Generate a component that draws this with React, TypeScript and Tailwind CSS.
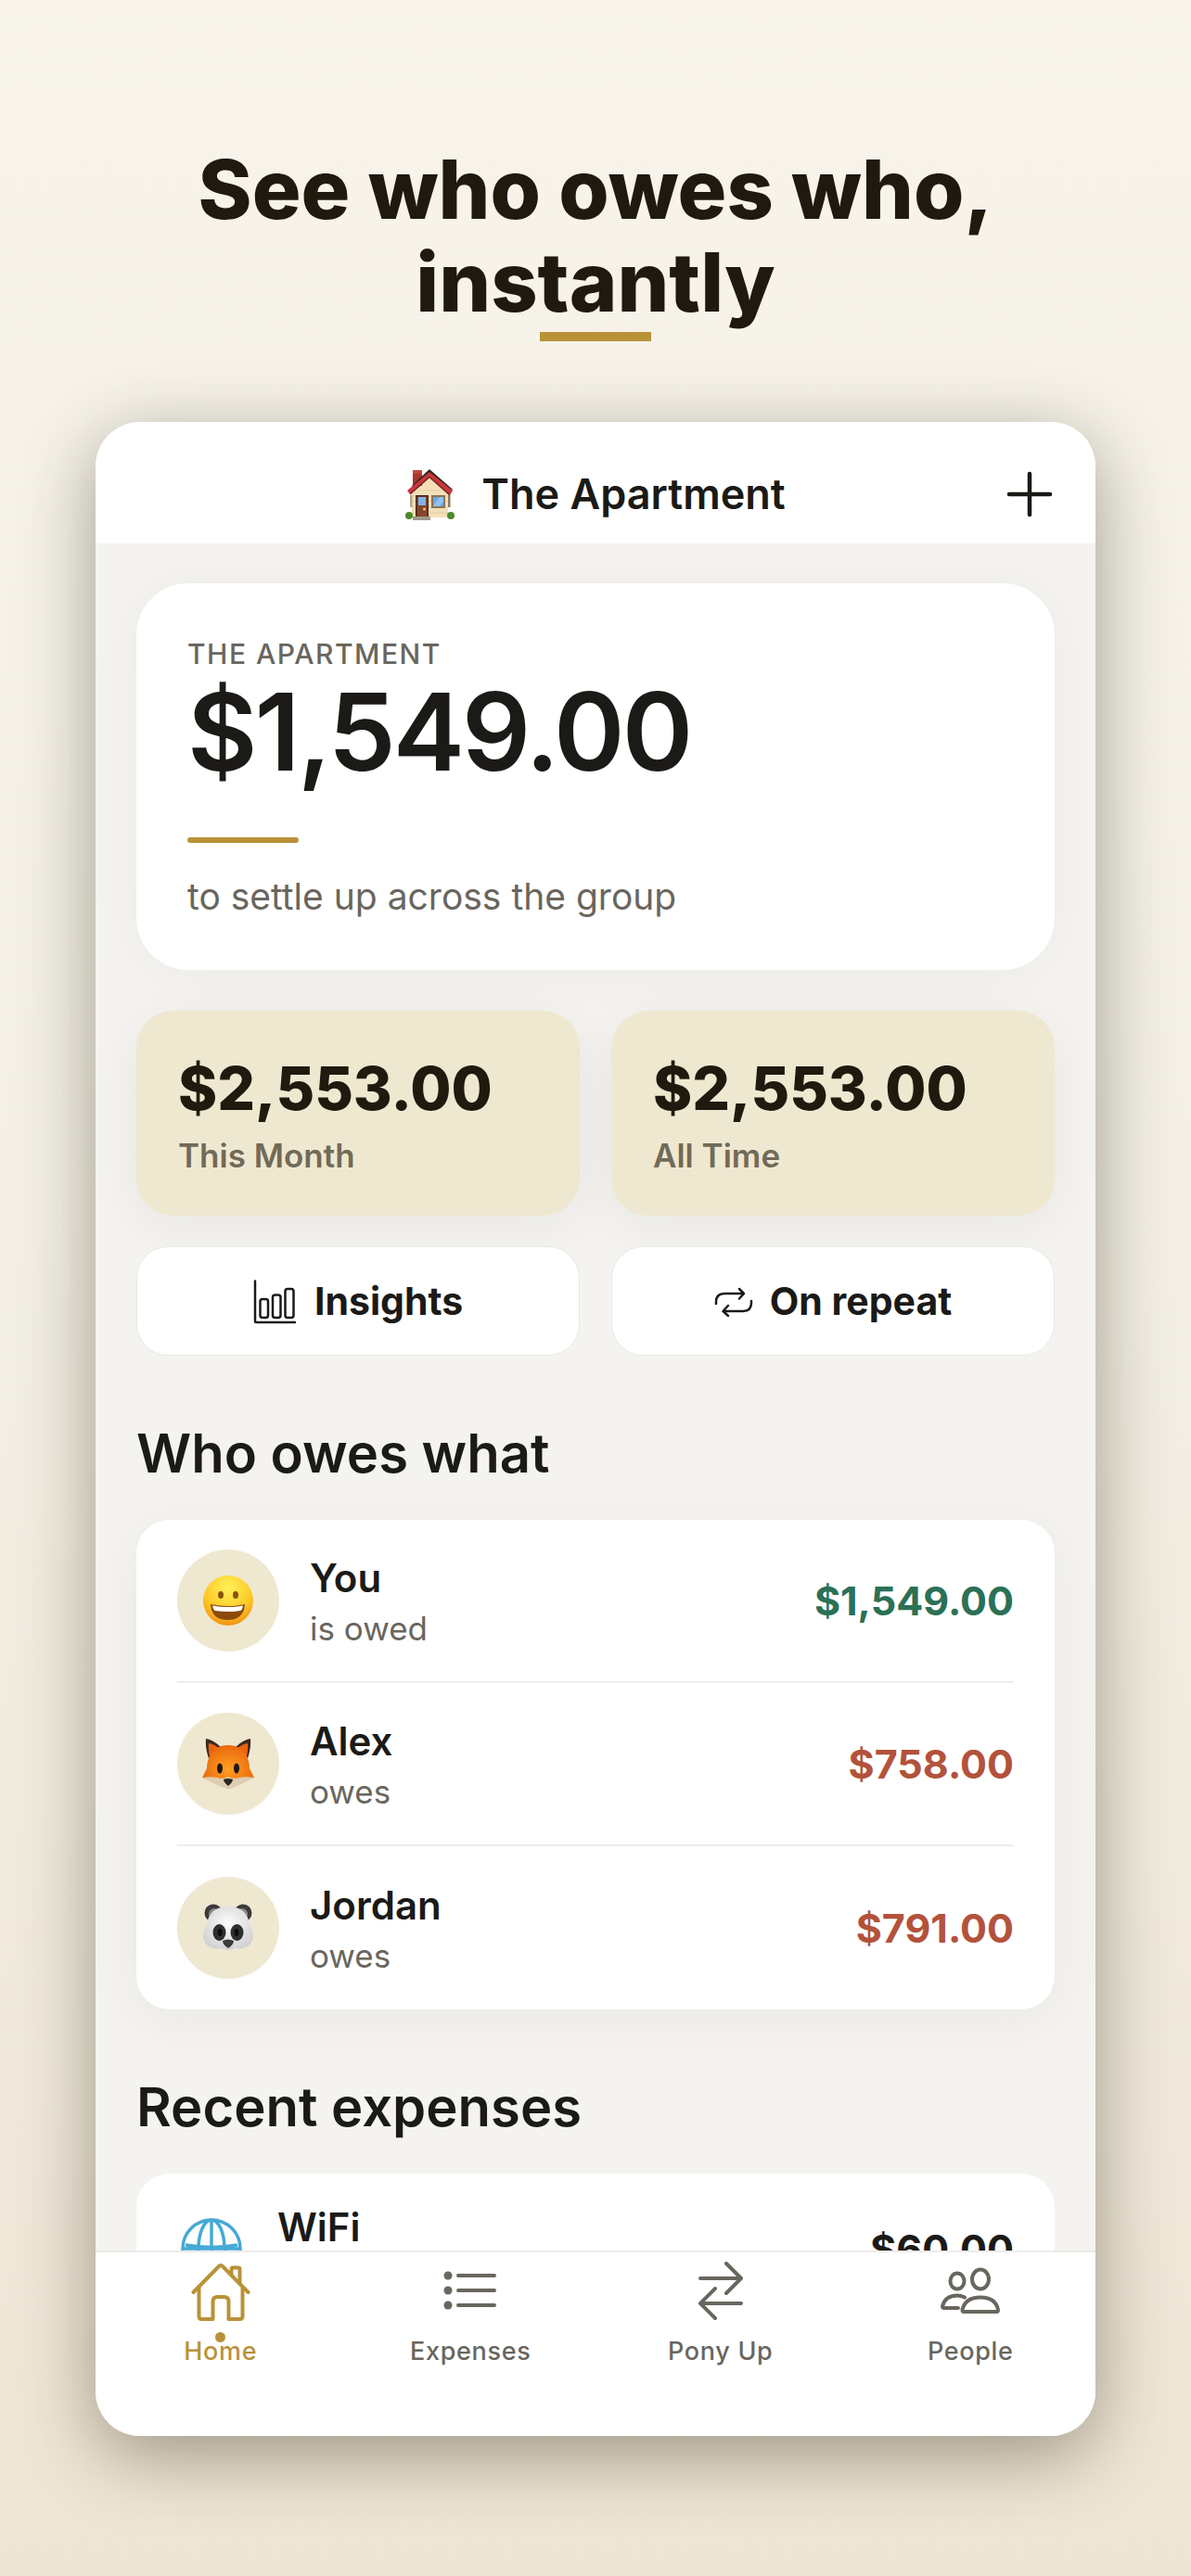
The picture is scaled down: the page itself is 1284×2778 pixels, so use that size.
import type { ReactNode } from "react";

const HouseEmoji = () => (
  <svg viewBox="0 0 54 56" className="h-14 w-[54px]" aria-hidden="true">
    <path d="M7 24 26 6l20 18v29H7z" fill="#f3e0b8" />
    <path d="M7 30h39M7 36h39M7 42h39M7 48h39M14 24h25" stroke="#e6cf9f" strokeWidth="1" />
    <rect x="5" y="29" width="2.500" height="13" fill="#b9a88c" />
    <rect x="46" y="29" width="2.500" height="13" fill="#8d7a60" />
    <rect x="8" y="3" width="10" height="16" fill="#a8362f" />
    <rect x="8" y="2" width="10" height="4" fill="#c4453c" />
    <path d="M8 20 26 3l24 21" stroke="#2f2220" strokeWidth="3" fill="none" />
    <path d="M2 24 26 4l25 20-3 5L26 9 5 28z" fill="#c8383a" />
    <path d="M5 28 26 9.500 48 29" stroke="#7c1f20" strokeWidth="1.500" fill="none" />
    <rect x="11" y="29" width="14" height="24" fill="#4d2618" />
    <rect x="12.500" y="30.500" width="11" height="22" fill="#86452a" />
    <rect x="14" y="31" width="8" height="9" fill="#7cb4ea" />
    <circle cx="20.500" cy="44" r="1.500" fill="#f0cf6a" />
    <rect x="28" y="29" width="15" height="14" fill="#8c7358" />
    <rect x="30" y="31" width="11" height="10" fill="#6ea9e6" />
    <path d="M30 41l7-10h4v4l-4 6z" fill="#93c2f1" />
    <rect x="8" y="52" width="19" height="4" fill="#a1968b" />
    <circle cx="4" cy="51" r="4" fill="#4c8b2c" />
    <circle cx="49" cy="51" r="4" fill="#4c8b2c" />
  </svg>
);

const SmileEmoji = () => (
  <svg viewBox="0 0 56 56" className="size-14" aria-hidden="true">
    <defs>
      <radialGradient id="smile" cx="0.5" cy="0.25" r="0.8">
        <stop offset="0" stopColor="#fff25a" />
        <stop offset="0.6" stopColor="#fdc926" />
        <stop offset="1" stopColor="#ee8a10" />
      </radialGradient>
    </defs>
    <circle cx="28" cy="28" r="27" fill="url(#smile)" />
    <ellipse cx="20" cy="22" rx="3" ry="4" fill="#8a520c" />
    <ellipse cx="36" cy="22" rx="3" ry="4" fill="#8a520c" />
    <path d="M9 32q19 4 37 0-1 17-18.500 17T9 32z" fill="#8a4b0a" />
    <path d="M11 33.500q17 3 33 0-.5 4-2.500 5.500-14 2-28 0-2-1.500-2.500-5.500z" fill="#fff" />
  </svg>
);

const FoxEmoji = () => (
  <svg viewBox="0 0 58 56" className="h-14 w-[58px]" aria-hidden="true">
    <defs>
      <radialGradient id="fox" cx="0.5" cy="0.55" r="0.6">
        <stop offset="0" stopColor="#ffa01f" />
        <stop offset="1" stopColor="#e9630c" />
      </radialGradient>
    </defs>
    <path d="M5 1q8 1 17 10l-13 14Q4 12 5 1zM53 1q-8 1-17 10l13 14Q54 12 53 1z" fill="#3c2a20" />
    <path d="M8 6q7 1 13 7l-10 15Q7 15 8 6zM50 6q-7 1-13 7l10 15q4-13 3-22z" fill="#e8640f" />
    <path d="M29 8q12 0 18 8 5 8 5 17l5 10q-6 2-11 5-9 5-17 7-8-2-17-7-5-3-11-5l5-10q0-9 5-17 6-8 18-8z" fill="url(#fox)" />
    <path d="M1 43q12-2 20 1 5 0 8-2 3 2 8 2 8-3 20-1-6 2-11 5-7 5-17 7-10-2-17-7-5-3-11-5z" fill="#ddcdb2" />
    <ellipse cx="20" cy="33" rx="3" ry="5.500" fill="#1d1713" />
    <ellipse cx="38" cy="33" rx="3" ry="5.500" fill="#1d1713" />
    <path d="M24 45q5-2 10 0 0 3-5 7-5-4-5-7z" fill="#2b2420" />
  </svg>
);

const PandaEmoji = () => (
  <svg viewBox="0 0 56 52" className="h-[52px] w-14" aria-hidden="true">
    <defs>
      <radialGradient id="panda" cx="0.5" cy="0.4" r="0.65">
        <stop offset="0" stopColor="#fdfdfd" />
        <stop offset="1" stopColor="#cfcfd1" />
      </radialGradient>
    </defs>
    <circle cx="12" cy="10" r="9.500" fill="#3a3a3a" />
    <circle cx="44" cy="10" r="9.500" fill="#3a3a3a" />
    <circle cx="13" cy="11" r="6" fill="#8a8a8a" />
    <circle cx="43" cy="11" r="6" fill="#8a8a8a" />
    <path d="M28 3q20 0 23 19 7 12 2 20-6 8-17 6-8 4-16 0Q9 50 3 42q-5-8 2-20Q8 3 28 3z" fill="url(#panda)" />
    <ellipse cx="18.500" cy="31" rx="7" ry="9" fill="#2f2f2f" />
    <ellipse cx="37.500" cy="31" rx="7" ry="9" fill="#2f2f2f" />
    <ellipse cx="19" cy="31" rx="2.500" ry="4" fill="#0c0c0c" />
    <ellipse cx="37" cy="31" rx="2.500" ry="4" fill="#0c0c0c" />
    <path d="M22 40q6-3 12 0 0 4-6 8-6-4-6-8z" fill="#3b3b3b" />
  </svg>
);

const GlobeEmoji = () => (
  <svg viewBox="0 0 66 66" className="size-[66px]" fill="none" stroke="#45a9d6" strokeWidth="3.500" aria-hidden="true">
    <circle cx="33" cy="33" r="31" fill="#fdfefe" />
    <ellipse cx="33" cy="33" rx="14" ry="31" />
    <path d="M33 2v62M2 33h62M5 29q28 5 56 0M6 48q27-5 54 0" />
  </svg>
);

const ChartIcon = () => (
  <svg viewBox="0 0 48 48" className="size-12" fill="none" stroke="#1b1a17" strokeWidth="2.500" strokeLinecap="round" strokeLinejoin="round" aria-hidden="true">
    <path d="M2 1.500V45q0 1 1 1h42" />
    <rect x="7.500" y="21" width="8.500" height="20" rx="2.500" />
    <rect x="21" y="16.500" width="8.500" height="24.500" rx="2.500" />
    <rect x="34.500" y="10" width="9" height="31" rx="2.500" />
  </svg>
);

const RepeatIcon = () => (
  <svg viewBox="0 0 42 32" className="h-8 w-[42px]" fill="none" stroke="#1b1a17" strokeWidth="2.500" strokeLinecap="round" strokeLinejoin="round" aria-hidden="true">
    <path d="M2 18v-2q0-9 9-9h21M27 2l5 5-5 5.500" />
    <path d="M40 15v2q0 9-9 9H10M15 20l-5.500 6 5.500 5" />
  </svg>
);

const HomeIcon = () => (
  <svg viewBox="0 0 64 64" className="size-16" fill="none" stroke="currentColor" strokeWidth="4" strokeLinecap="round" strokeLinejoin="round" aria-hidden="true">
    <path d="M2.500 33 30 5q2-2 4 0l27.500 28" />
    <path d="M8.500 28v31q0 3 3 3h12V43q0-5 5-5h7q5 0 5 5v19h12q3 0 3-3V28" />
    <path d="M43.500 14V8q0-1.500 1.500-1.500h6q1.500 0 1.500 1.500v16" />
  </svg>
);

const ListIcon = () => (
  <svg viewBox="0 0 64 64" className="size-16" fill="none" stroke="currentColor" strokeWidth="4" strokeLinecap="round" aria-hidden="true">
    <path d="M19 15h39M19 31h39M19 47h39" />
    <g fill="currentColor" stroke="none">
      <circle cx="8" cy="15" r="4.500" />
      <circle cx="8" cy="31" r="4.500" />
      <circle cx="8" cy="47" r="4.500" />
    </g>
  </svg>
);

const SwapIcon = () => (
  <svg viewBox="0 0 64 64" className="size-16" fill="none" stroke="currentColor" strokeWidth="4" strokeLinecap="round" strokeLinejoin="round" aria-hidden="true">
    <path d="M10 18h44M38 2l16 16-16 16" />
    <path d="M54 45H10M26 29 10 45l16 16" />
  </svg>
);

const PeopleIcon = () => (
  <svg viewBox="0 0 64 64" className="size-16" fill="none" stroke="currentColor" strokeWidth="4" strokeLinecap="round" strokeLinejoin="round" aria-hidden="true">
    <ellipse cx="43" cy="19" rx="9" ry="10.500" />
    <ellipse cx="18" cy="21" rx="7.500" ry="8.500" />
    <path d="M25 54q-1.500 0-1.500-2 3-13.500 19.500-13.500T62 52q0 2-1.500 2z" />
    <path d="M19 50H4q-2 0-2-2 3-11.500 16-11.500 4 0 8 2" />
  </svg>
);

const stats = [
  { amount: "$2,553.00", label: "This Month" },
  { amount: "$2,553.00", label: "All Time" },
];

const balances = [
  { name: "You", note: "is owed", amount: "$1,549.00", owed: true, icon: <SmileEmoji /> },
  { name: "Alex", note: "owes", amount: "$758.00", owed: false, icon: <FoxEmoji /> },
  { name: "Jordan", note: "owes", amount: "$791.00", owed: false, icon: <PandaEmoji /> },
];

const tabs = [
  { label: "Home", icon: <HomeIcon />, active: true },
  { label: "Expenses", icon: <ListIcon />, active: false },
  { label: "Pony Up", icon: <SwapIcon />, active: false },
  { label: "People", icon: <PeopleIcon />, active: false },
];

const SectionTitle = ({ children }: { children: ReactNode }) => (
  <h2 className="pt-[67px] pb-[34px] text-[58px] leading-[76px] font-semibold">{children}</h2>
);

const ActionButton = ({ icon, label }: { icon: ReactNode; label: string }) => (
  <button className="flex h-[118px] items-center justify-center gap-[18px] rounded-[34px] border border-[#e9e8e2] bg-white pt-0.5 text-[41px] font-bold">
    {icon}
    {label}
  </button>
);

const App = () => {
  return (
    <div className="flex h-screen flex-col bg-linear-to-b from-[#f8f4eb] via-[#f3efe4] to-[#efe5d5] px-[103px] pb-[151px] font-['Inter',sans-serif] text-[#1b1a17]">
      <div className="flex flex-col items-center pt-[154px] pb-[87px] text-center">
        <h1 className="text-[88px] leading-[100px] font-extrabold text-[#20190e]">
          See who owes who,
          <br />
          instantly
        </h1>
        <div className="mt-1 h-2.5 w-[120px] bg-[#b99238]" />
      </div>

      <div className="flex min-h-0 flex-1 flex-col overflow-hidden rounded-[48px] bg-[#f4f3ef] shadow-[0_20px_80px_rgba(40,36,16,0.42)]">
        <header className="grid h-[131px] shrink-0 grid-cols-[1fr_auto_1fr] items-center bg-white px-[46px] pt-6">
          <div />
          <div className="flex items-center gap-7 text-[45px] leading-[56px] font-semibold">
            <HouseEmoji />
            The Apartment
          </div>
          <button aria-label="Add expense" className="justify-self-end">
            <svg viewBox="0 0 50 50" className="size-[50px]" stroke="#1b1a17" strokeWidth="4.500" strokeLinecap="round" aria-hidden="true">
              <path d="M25 3v44M3 25h44" />
            </svg>
          </button>
        </header>

        <main className="min-h-0 flex-1 overflow-y-auto px-11 pt-[43px] [scrollbar-width:none]">
          <section className="h-[417px] rounded-[56px] bg-white px-[55px] pt-14 shadow-[0_4px_60px_rgba(40,36,16,0.04)]">
            <p className="text-[30px] leading-10 font-medium tracking-wider text-[#69665e] uppercase">The Apartment</p>
            <p className="text-[116px] leading-[128px] font-semibold tracking-tight">$1,549.00</p>
            <div className="mt-[50px] h-1.5 w-[120px] rounded-full bg-[#b99238]" />
            <p className="mt-[30px] text-[39px] leading-[56px] text-[#69665e]">to settle up across the group</p>
          </section>

          <div className="mt-11 grid grid-cols-2 gap-[34px]">
            {stats.map((stat) => (
              <div
                key={stat.label}
                className="h-[221px] rounded-[40px] bg-[#efe8d0] px-[45px] pt-[46px] shadow-[0_12px_60px_rgba(40,36,16,0.06)]"
              >
                <p className="text-[64px] leading-[76px] font-extrabold text-[#20190e]">{stat.amount}</p>
                <p className="mt-2.5 text-[35px] leading-[48px] font-semibold text-[#716a58]">{stat.label}</p>
              </div>
            ))}
          </div>

          <div className="mt-[33px] grid grid-cols-2 gap-[34px]">
            <ActionButton icon={<ChartIcon />} label="Insights" />
            <ActionButton icon={<RepeatIcon />} label="On repeat" />
          </div>

          <SectionTitle>Who owes what</SectionTitle>
          <ul className="divide-y-2 divide-[#eeeeec] rounded-[36px] bg-white px-11 shadow-[0_12px_60px_rgba(40,36,16,0.05)]">
            {balances.map((person) => (
              <li key={person.name} className="flex h-44 items-center">
                <div className="flex size-[110px] items-center justify-center rounded-full bg-[#efe8d0]">
                  {person.icon}
                </div>
                <div className="ml-[33px] flex-1 pt-1.5">
                  <p className="text-[42px] leading-[54px] font-semibold">{person.name}</p>
                  <p className="text-[35px] leading-[54px] text-[#69665e]">{person.note}</p>
                </div>
                <span className={person.owed ? "text-[43px] font-bold text-[#2c7056]" : "text-[43px] font-bold text-[#b3523b]"}>
                  {person.amount}
                </span>
              </li>
            ))}
          </ul>

          <SectionTitle>Recent expenses</SectionTitle>
          <ul className="rounded-[36px] bg-white px-11">
            <li className="flex h-[162px] items-center">
              <div className="ml-1">
                <GlobeEmoji />
              </div>
              <div className="ml-[38px] h-[100px] flex-1">
                <p className="text-[42px] leading-[54px] font-semibold">WiFi</p>
              </div>
              <span className="text-[43px] font-bold">$60.00</span>
            </li>
          </ul>
        </main>

        <nav className="grid h-[200px] shrink-0 grid-cols-4 border-t-2 border-[#ecebe8] bg-white">
          {tabs.map((tab) => (
            <a
              key={tab.label}
              href="#"
              className={
                tab.active
                  ? "relative flex flex-col items-center pt-2.5 text-[#b99238]"
                  : "relative flex flex-col items-center pt-2.5 text-[#69665e]"
              }
            >
              {tab.icon}
              {tab.active && <span className="absolute top-[86px] size-[11px] rounded-full bg-[#b99238]" />}
              <span className="mt-[15px] text-[27px] leading-9 font-medium tracking-wide">{tab.label}</span>
            </a>
          ))}
        </nav>
      </div>
    </div>
  );
};

export default App;
